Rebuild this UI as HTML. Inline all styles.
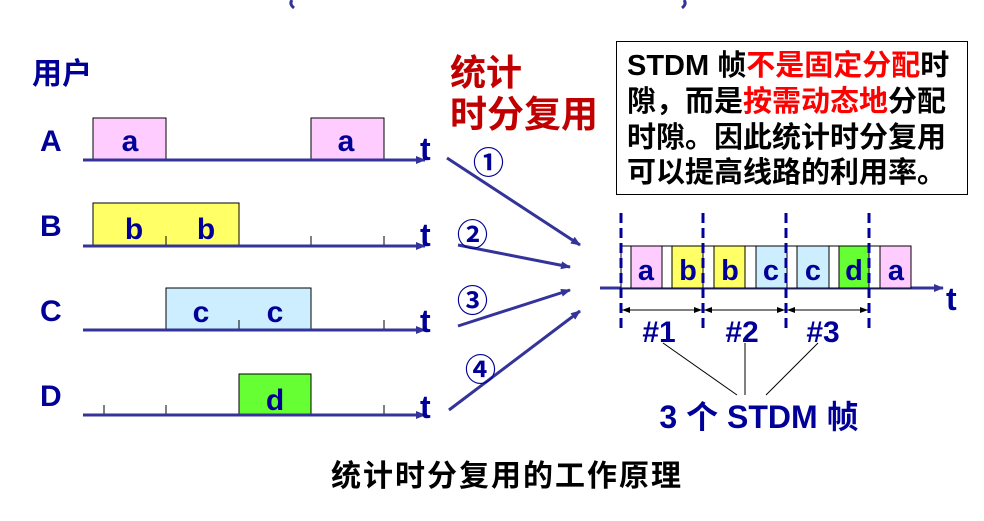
<!DOCTYPE html>
<html><head><meta charset="utf-8"><style>
body{margin:0;width:984px;height:521px;background:#fff;overflow:hidden;position:relative;font-family:"Liberation Sans","Noto Sans CJK SC",sans-serif}
.box{position:absolute;left:616px;top:41px;width:350px;height:152px;border:1.5px solid #000;}
.box div{position:absolute;left:10px;font-size:29px;font-weight:bold;color:#000;white-space:nowrap;line-height:36px}
.r{color:#ff0000}
</style></head><body>
<svg width="984" height="521" style="position:absolute;left:0;top:0" font-family="Liberation Sans, Noto Sans CJK SC, sans-serif" font-weight="bold">
<defs><marker id="ar" markerWidth="10" markerHeight="8" refX="9" refY="4" orient="auto" markerUnits="userSpaceOnUse"><path d="M0,0 L10,4 L0,8 z" fill="#333399"/></marker>
<marker id="sa" markerWidth="8" markerHeight="6" refX="0" refY="3" orient="auto" markerUnits="userSpaceOnUse"><path d="M8,0 L0,3 L8,6 z" fill="#000"/></marker>
<marker id="ea" markerWidth="8" markerHeight="6" refX="8" refY="3" orient="auto" markerUnits="userSpaceOnUse"><path d="M0,0 L8,3 L0,6 z" fill="#000"/></marker></defs>
<path d="M292,0 q-3,4 2,8" stroke="#333399" stroke-width="3" fill="none"/>
<path d="M684,0 q3,4 -2,8" stroke="#333399" stroke-width="3" fill="none"/>
<text x="32" y="84" font-size="30" fill="#000099">用户</text>
<g font-size="30" fill="#000099"><text x="40" y="151">A</text><text x="40" y="236">B</text><text x="40" y="321">C</text><text x="40" y="406">D</text></g>
<g stroke="#000" stroke-width="1">
<rect x="93" y="118" width="73" height="42" fill="#ffccff"/><rect x="311" y="118" width="73" height="42" fill="#ffccff"/>
<rect x="93" y="203" width="146" height="43" fill="#ffff66"/>
<rect x="166" y="288" width="145" height="42" fill="#cceeff"/>
<rect x="239" y="374" width="72" height="41" fill="#66ff33"/>
<path d="M166,236v10M311,236v10M384,236v10M239,320v10M384,320v10M104,405v10M166,405v10M384,405v10"/>
</g>
<g font-size="30" fill="#000099" text-anchor="middle">
<text x="130" y="151">a</text><text x="346" y="151">a</text>
<text x="134" y="239">b</text><text x="206" y="239">b</text>
<text x="201" y="322">c</text><text x="275" y="322">c</text>
<text x="275" y="410">d</text></g>
<g stroke="#333399" stroke-width="3" marker-end="url(#ar)">
<line x1="83" y1="160" x2="425" y2="160"/><line x1="83" y1="246" x2="425" y2="246"/>
<line x1="83" y1="330" x2="425" y2="330"/><line x1="83" y1="415" x2="425" y2="415"/>
<line x1="447" y1="158" x2="580" y2="245"/><line x1="458" y1="245" x2="570" y2="267"/>
<line x1="458" y1="326" x2="570" y2="290"/><line x1="449" y1="410" x2="580" y2="311"/>
<line x1="600" y1="288" x2="943" y2="288"/>
</g>
<g font-size="32" fill="#000099"><text x="420" y="160">t</text><text x="420" y="246">t</text><text x="420" y="332">t</text><text x="420" y="418">t</text><text x="946" y="310">t</text></g>
<g font-size="31" fill="#000099" font-weight="bold"><text x="473" y="174">①</text><text x="457" y="246">②</text><text x="457" y="312">③</text><text x="465" y="381">④</text></g>
<g stroke="#000" stroke-width="1">
<rect x="621" y="246" width="290" height="42" fill="#fff"/>
<rect x="631" y="246" width="31" height="42" fill="#ffccff"/>
<rect x="672" y="246" width="31" height="42" fill="#ffff66"/>
<rect x="714" y="246" width="31" height="42" fill="#ffff66"/>
<rect x="756" y="246" width="31" height="42" fill="#cceeff"/>
<rect x="797" y="246" width="32" height="42" fill="#cceeff"/>
<rect x="839" y="246" width="30" height="42" fill="#66ff33"/>
<rect x="880" y="246" width="31" height="42" fill="#ffccff"/>
</g>
<g font-size="29" fill="#000099" text-anchor="middle">
<text x="646" y="280">a</text><text x="688" y="280">b</text><text x="730" y="280">b</text><text x="771" y="280">c</text><text x="813" y="280">c</text><text x="854" y="280">d</text><text x="896" y="280">a</text></g>
<g stroke="#000099" stroke-width="3" stroke-dasharray="10,5">
<line x1="621" y1="213" x2="621" y2="328"/><line x1="703" y1="213" x2="703" y2="328"/><line x1="786" y1="213" x2="786" y2="328"/><line x1="869" y1="213" x2="869" y2="328"/></g>
<g stroke="#000" stroke-width="1" marker-start="url(#sa)" marker-end="url(#ea)">
<line x1="622" y1="310" x2="702" y2="310"/><line x1="704" y1="310" x2="785" y2="310"/><line x1="787" y1="310" x2="868" y2="310"/></g>
<g font-size="30" fill="#000099" text-anchor="middle"><text x="659" y="342">#1</text><text x="742" y="342">#2</text><text x="823" y="342">#3</text>
<text x="759" y="428" font-size="32">3 个 STDM 帧</text></g>
<g stroke="#000" stroke-width="1"><line x1="663" y1="343" x2="737" y2="395"/><line x1="745" y1="343" x2="745" y2="395"/><line x1="818" y1="343" x2="766" y2="395"/></g>
<text x="450" y="85" font-size="36" fill="#c00000">统计</text>
<text x="450" y="127" font-size="37" fill="#c00000">时分复用</text>
<text x="507" y="486" font-size="30" fill="#000" text-anchor="middle" letter-spacing="2">统计时分复用的工作原理</text>
</svg>
<div class="box">
<div style="top:6px">STDM 帧<span class="r">不是固定分配</span>时</div>
<div style="top:42px">隙，而是<span class="r">按需动态地</span>分配</div>
<div style="top:78px">时隙。因此统计时分复用</div>
<div style="top:113px">可以提高线路的利用率。</div>
</div>
</body></html>
